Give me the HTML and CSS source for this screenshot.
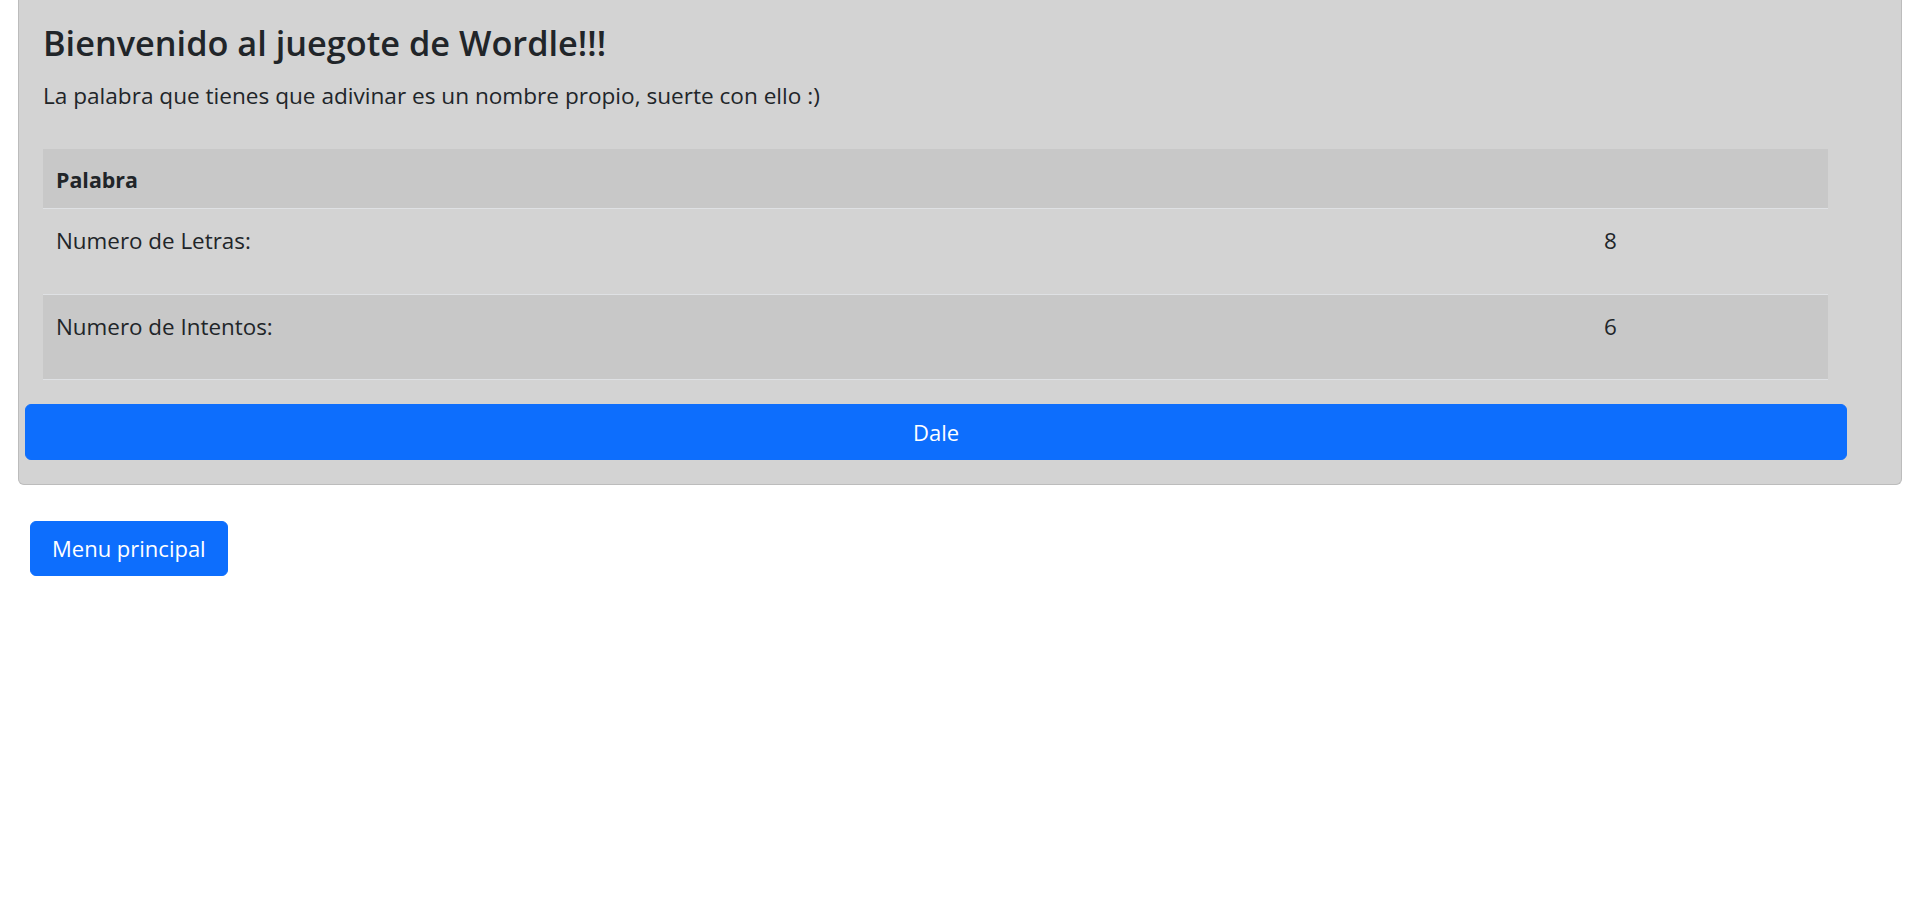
FILE: index.html
```html
<!DOCTYPE html>
<html lang="es">
<head>
<meta charset="utf-8">
<title>Wordle</title>
<link rel="stylesheet" href="styles.css">
</head>
<body>
<main class="page">
  <section class="card">
    <div class="card-body">
      <h3 class="title">Bienvenido al juegote de Wordle!!!</h3>
      <p class="intro">La palabra que tienes que adivinar es un nombre propio, suerte con ello :)</p>
      <table class="info">
        <thead>
          <tr><th class="col-label">Palabra</th><th class="col-value"></th></tr>
        </thead>
        <tbody>
          <tr><td>Numero de Letras:</td><td>8</td></tr>
          <tr class="striped"><td>Numero de Intentos:</td><td>6</td></tr>
        </tbody>
      </table>
    </div>
    <div class="card-action">
      <button class="btn btn-block" type="button">Dale</button>
    </div>
  </section>
  <div class="menu">
    <button class="btn btn-menu" type="button">Menu principal</button>
  </div>
</main>
</body>
</html>
```
FILE: styles.css
```css
* { box-sizing: border-box; }

html, body {
  margin: 0;
  padding: 0;
  background: #ffffff;
}

body {
  font-family: "Open Sans", "Noto Sans", sans-serif;
  color: #212529;
}

.page {
  padding: 0 18px;
}

.card {
  background: #d3d3d3;
  border: 1px solid #bcbcbc;
  border-top: none;
  border-radius: 0 0 6px 6px;
  padding-bottom: 24px;
}

.card-body {
  padding: 22px 0 0 24px;
}

.title {
  margin: 0;
  font-size: 34.3px;
  font-weight: 600;
  line-height: 42px;
}

.intro {
  margin: 15px 0 0;
  font-size: 22.6px;
  line-height: 34px;
}

.info {
  margin-top: 36px;
  width: 1785px;
  border-collapse: collapse;
  font-size: 22.4px;
  line-height: 33.6px;
}

.info th,
.info td {
  text-align: left;
  vertical-align: top;
  border-bottom: 1px solid #dfe1e4;
  padding: 15px 13px 36px;
}

.info th {
  background: #c8c8c8;
  font-size: 21.4px;
  font-weight: 700;
  line-height: 32px;
  padding: 15px 13px 12px;
}

.col-label { width: 1548px; }

.info tr.striped td { background: #c8c8c8; }

.card-action {
  margin: 24px 54px 0 6px;
}

.btn {
  display: block;
  font-family: inherit;
  font-size: 22px;
  color: #ffffff;
  background: #0d6efd;
  border: 1px solid #0d6efd;
  border-radius: 6px;
  cursor: pointer;
}

.btn-block {
  width: 100%;
  padding: 10px 20px;
  line-height: 34px;
  text-align: center;
}

.menu {
  padding: 36px 0 0 12px;
}

.btn-menu {
  padding: 10px 21px;
  line-height: 33px;
}
```
